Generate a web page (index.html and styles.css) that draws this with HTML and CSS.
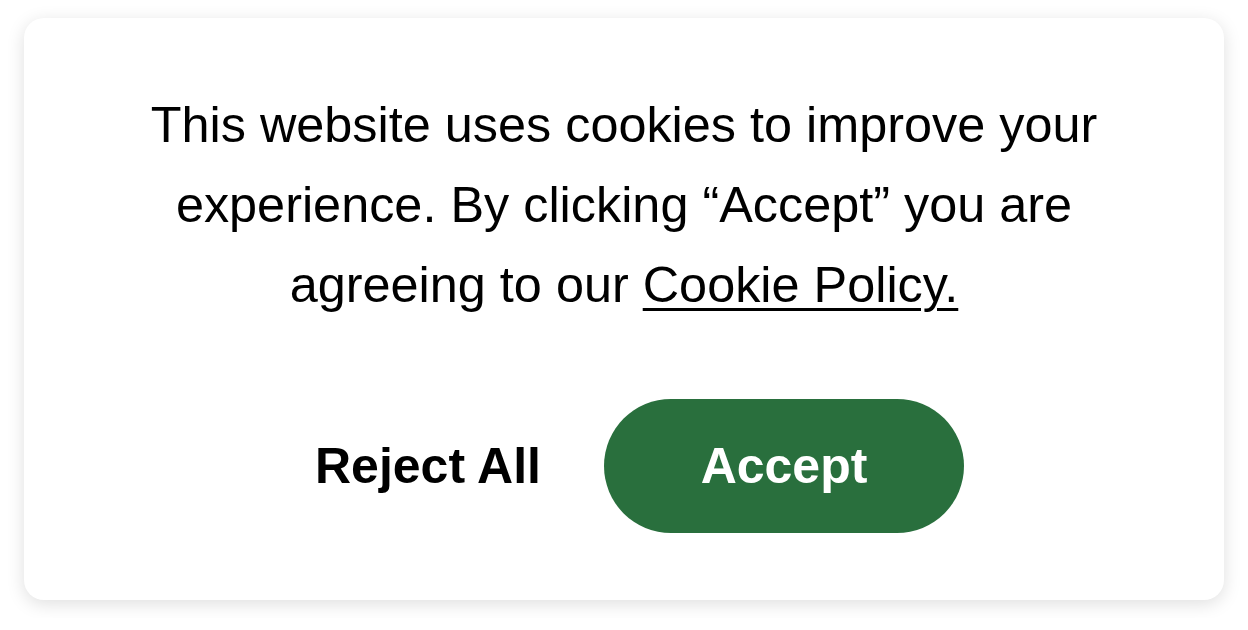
FILE: index.html
```html
<!DOCTYPE html>
<html lang="en">
<head>
<meta charset="utf-8">
<title>Cookie consent</title>
<link rel="stylesheet" href="styles.css">
</head>
<body>
<div class="card">
  <p class="message">This website uses cookies to improve your experience. By clicking “Accept” you are agreeing to our <a href="#" class="policy">Cookie Policy.</a></p>
  <div class="actions">
    <button class="btn reject" type="button">Reject All</button>
    <button class="btn accept" type="button">Accept</button>
  </div>
</div>
</body>
</html>
```

FILE: styles.css
```css
html, body {
  margin: 0;
  padding: 0;
  background: #ffffff;
}

body {
  padding: 18px 24px;
  font-family: "Liberation Sans", Arial, sans-serif;
  color: #000;
}

.card {
  box-sizing: border-box;
  width: 1200px;
  height: 582px;
  background: #fff;
  border-radius: 20px;
  box-shadow: 0 4px 18px rgba(0, 0, 0, 0.13);
  padding: 67px 0;
  display: flex;
  flex-direction: column;
  align-items: center;
}

.message {
  margin: 0;
  max-width: 1000px;
  font-size: 50.4px;
  line-height: 80px;
  text-align: center;
}

.policy {
  color: #000;
  text-decoration: underline;
  text-decoration-thickness: 3px;
  text-underline-offset: 6px;
}

.actions {
  margin-top: 74px;
  display: flex;
  align-items: center;
  gap: 33px;
}

.btn {
  font-family: "Liberation Sans", Arial, sans-serif;
  font-size: 50px;
  font-weight: bold;
  line-height: 54px;
  border: none;
  margin: 0;
  cursor: pointer;
}

.reject {
  background: transparent;
  color: #000;
  padding: 40px 30px 40px 31px;
}

.accept {
  background: #296f3d;
  color: #fff;
  width: 360px;
  height: 134px;
  padding: 0;
  border-radius: 67px;
}
```
